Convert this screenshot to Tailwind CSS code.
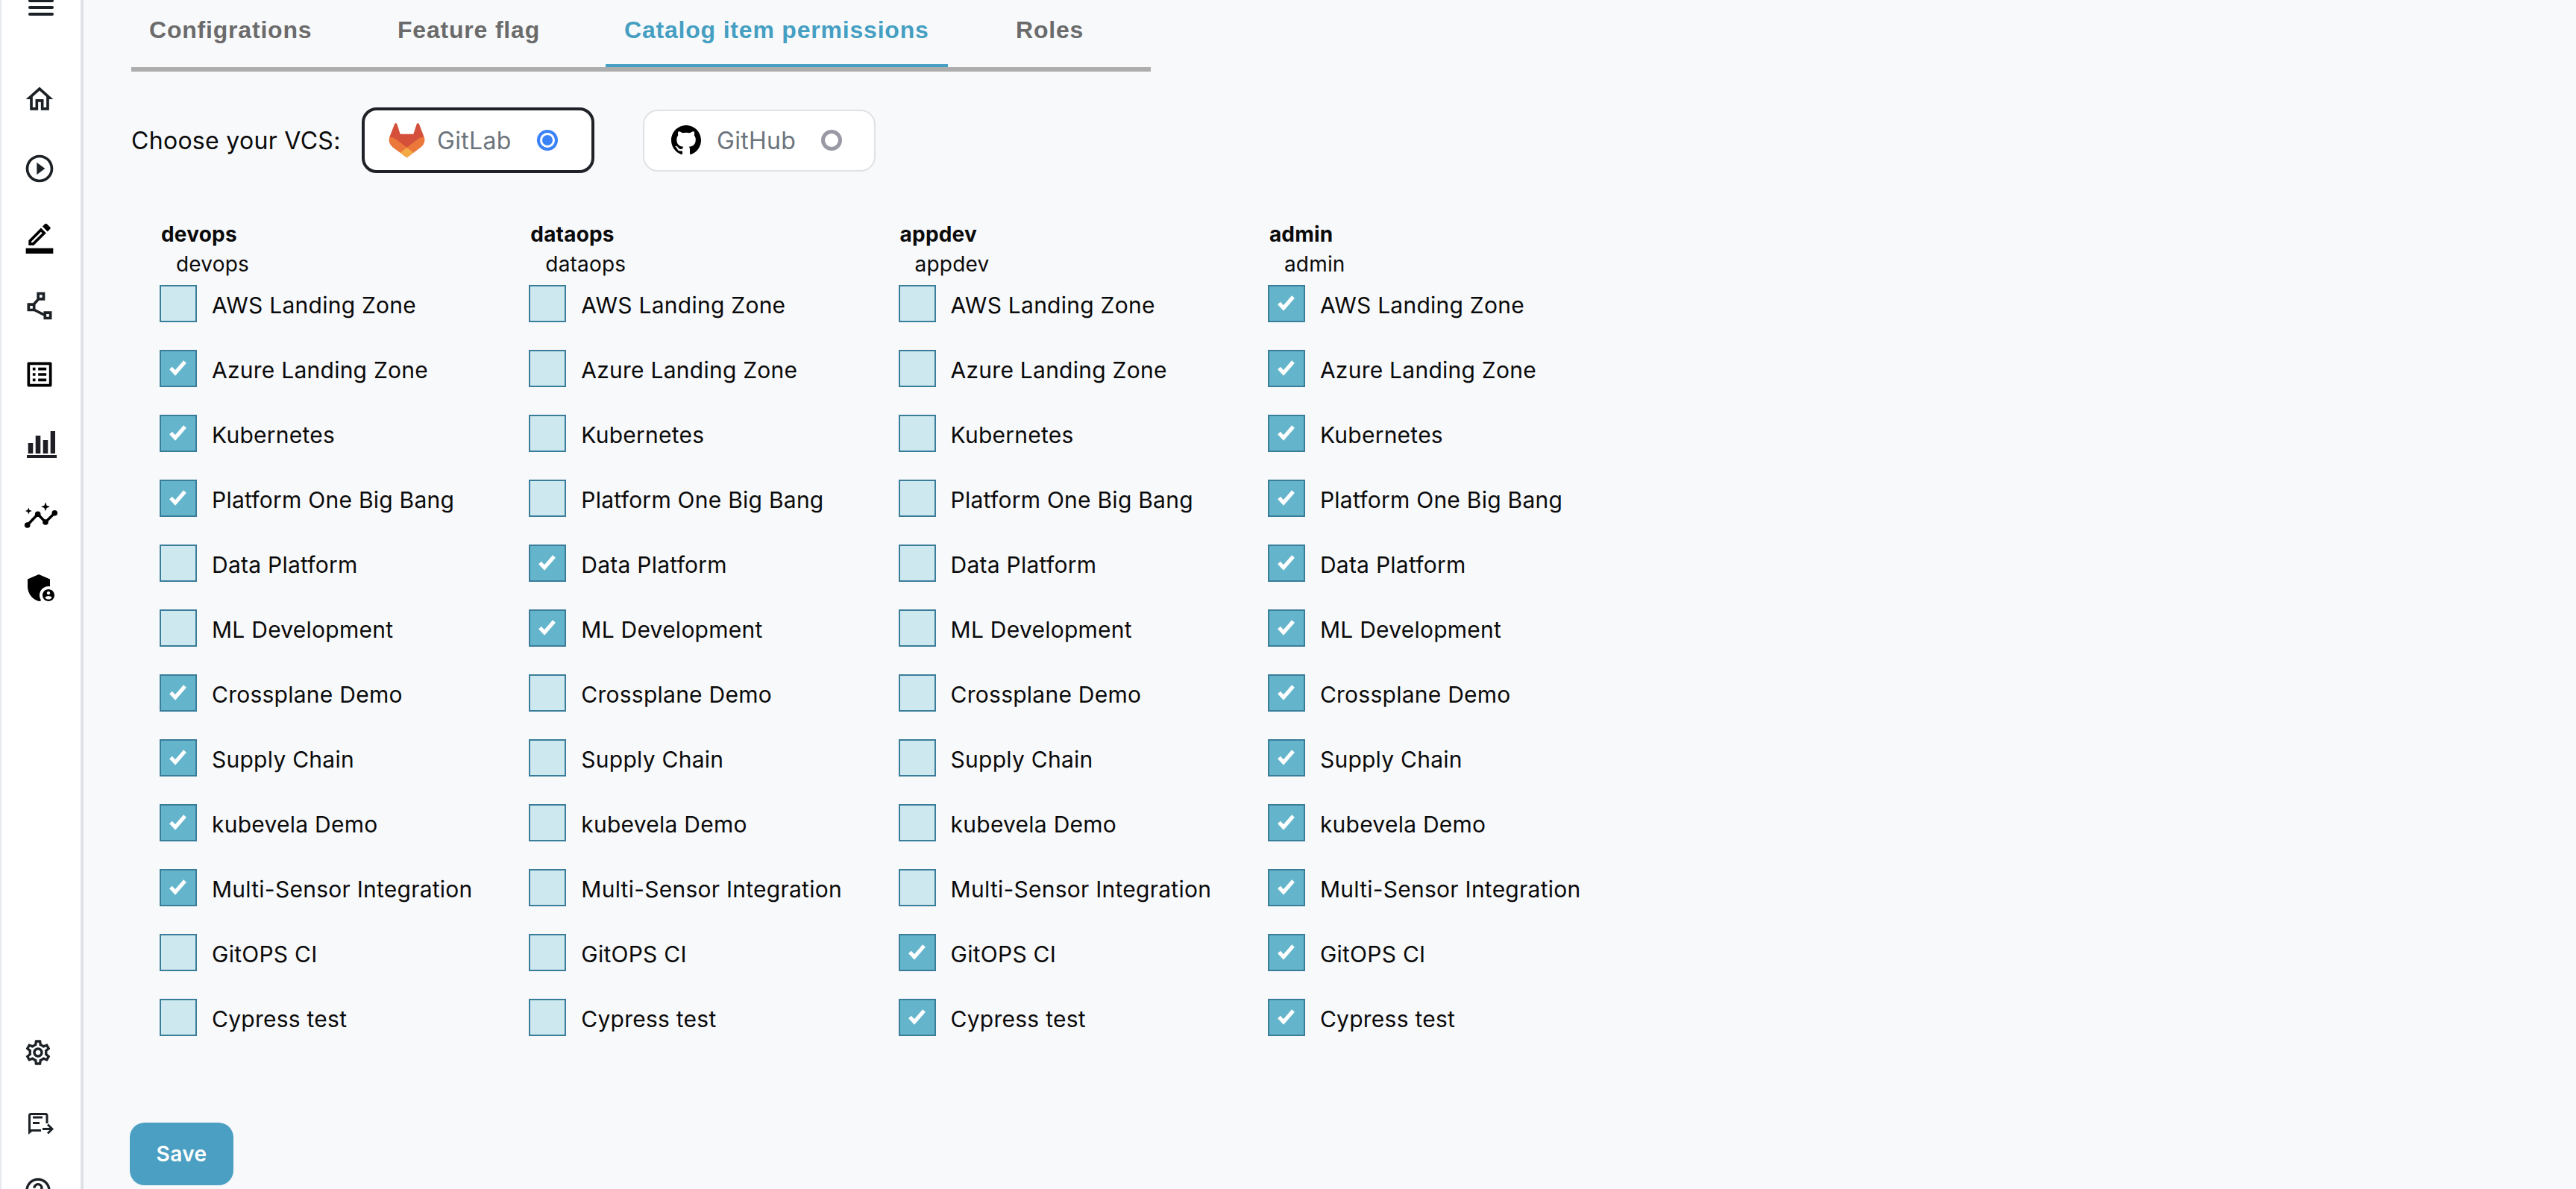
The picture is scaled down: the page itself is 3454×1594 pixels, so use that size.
<!DOCTYPE html>
<html><head><meta charset="utf-8"><title>Catalog item permissions</title>
<script src="https://cdn.jsdelivr.net/npm/@tailwindcss/browser@4"></script>
</head>
<body>
<div class="flex h-[1594px] w-[3454px] overflow-hidden bg-[#f8f9fb] font-[Inter,sans-serif] text-[#0a0a0a]">
<aside class="flex flex-col h-full w-[112px] shrink-0 bg-white border-l-2 border-r-4 border-l-[#e5e9ee] border-r-[#dee2e6] text-[#1c2126]">
<svg class="block shrink-0 ml-[36px] -mt-[1px]" width="34" height="22" viewBox="0 0 34 22" fill="currentColor"><rect y="0" width="34" height="4" rx="2"/><rect y="9" width="34" height="4" rx="2"/><rect y="18" width="34" height="4" rx="2"/></svg>
<svg class="block shrink-0 ml-[29px] mt-[90px]" width="44" height="44" viewBox="0 0 24 24" fill="currentColor"><path d="m12 5.69 5 4.5V18h-2v-6H9v6H7v-7.81zM12 3 2 12h3v8h6v-6h2v6h6v-8h3z"/></svg>
<svg class="block shrink-0 ml-[29px] mt-[49px]" width="44" height="44" viewBox="0 0 24 24" fill="currentColor"><path d="M10 16.5l6-4.5-6-4.5v9zM12 2C6.48 2 2 6.48 2 12s4.48 10 10 10 10-4.48 10-10S17.52 2 12 2zm0 18c-4.41 0-8-3.59-8-8s3.59-8 8-8 8 3.59 8 8-3.59 8-8 8z"/></svg>
<svg class="block shrink-0 ml-[29px] mt-[48px] text-black" width="44" height="44" viewBox="0 0 24 24" fill="currentColor"><path d="M16.81 8.94l-3.75-3.75L4 14.25V18h3.75l9.06-9.06zM6 16v-.92l7.06-7.06.92.92L6.92 16H6zm13.71-9.96c.39-.39.39-1.02 0-1.41L17.37 2.29c-.39-.39-1.02-.39-1.41 0L14.13 4.12l3.75 3.75 1.83-1.83zM2 20h20v4H2z"/></svg>
<svg class="block shrink-0 ml-[29px] mt-[48px]" width="44" height="44" viewBox="0 0 24 24" fill="currentColor"><path d="M15 16v1.26l-6-3v-3.17L11.7 8H16V2h-6v4.9L7.3 10H3v6h5l7 3.5V22h6v-6h-6zM12 4h2v2h-2V4zM7 14H5v-2h2v2zm12 6h-2v-2h2v2z"/></svg>
<svg class="block shrink-0 ml-[29px] mt-[48px] text-black" width="44" height="44" viewBox="0 0 24 24" fill="currentColor"><path d="M19 5v14H5V5h14m1.1-2H3.9c-.5 0-.9.4-.9.9v16.2c0 .4.4.9.9.9h16.2c.4 0 .9-.5.9-.9V3.9c0-.5-.5-.9-.9-.9zM11 7h6v2h-6V7zm0 4h6v2h-6v-2zm0 4h6v2h-6zM7 7h2v2H7zm0 4h2v2H7zm0 4h2v2H7z"/></svg>
<svg class="block shrink-0 ml-[33px] mt-[52px] text-[#1e1e24]" width="42" height="40" viewBox="0 0 42 40" fill="currentColor"><rect x="2.7" y="18" width="6.6" height="14"/><rect x="12.7" y="8" width="6.6" height="24"/><rect x="22.7" y="14" width="6.6" height="18"/><rect x="32.7" y="2" width="6.3" height="30"/><rect x="1" y="34" width="40" height="4"/></svg>
<svg class="block shrink-0 ml-[28px] mt-[54px] text-black" width="50" height="48" viewBox="0 0 50 48" fill="currentColor"><path d="M6.7 34 20.7 19.3 31 30 43.3 17.7" fill="none" stroke="currentColor" stroke-width="3.6"/><circle cx="6.7" cy="34" r="3.8"/><circle cx="20.7" cy="19.3" r="3.8"/><circle cx="31" cy="30" r="3.8"/><circle cx="43.3" cy="17.7" r="3.8"/><path d="M8.3 10.5 9.5 13.8 12.8 15 9.5 16.2 8.3 19.5 7.1 16.2 3.8 15 7.1 13.8Z"/><path d="M31 3.3 32.6 7.7 37 9.3 32.6 10.9 31 15.3 29.4 10.9 25 9.3 29.4 7.7Z"/></svg>
<svg class="block shrink-0 ml-[29px] mt-[46px] text-black" width="48" height="48" viewBox="0 0 24 24" fill="currentColor"><path d="M17 11c.34 0 .67.04 1 .09V6.27L10.5 3 3 6.27v4.91c0 4.54 3.2 8.79 7.5 9.82.55-.13 1.08-.32 1.6-.55-.69-.98-1.1-2.17-1.1-3.45 0-3.31 2.69-6 6-6z"/><path d="M17 13c-2.21 0-4 1.79-4 4s1.79 4 4 4 4-1.79 4-4-1.79-4-4-4zm0 1.38c.62 0 1.12.51 1.12 1.12s-.51 1.12-1.12 1.12-1.12-.51-1.12-1.12.5-1.12 1.12-1.12zm0 5.37c-.93 0-1.74-.46-2.24-1.17.05-.72 1.51-1.08 2.24-1.08s2.19.36 2.24 1.08c-.5.71-1.31 1.17-2.24 1.17z"/></svg>
<svg class="block shrink-0 ml-[29px] mt-[579px]" width="40" height="40" viewBox="0 0 24 24" fill="currentColor"><path d="M19.43 12.98c.04-.32.07-.64.07-.98 0-.34-.03-.66-.07-.98l2.11-1.65c.19-.15.24-.42.12-.64l-2-3.46c-.09-.16-.26-.25-.44-.25-.06 0-.12.01-.17.03l-2.49 1c-.52-.4-1.08-.73-1.69-.98l-.38-2.65C14.46 2.18 14.25 2 14 2h-4c-.25 0-.46.18-.49.42l-.38 2.65c-.61.25-1.17.59-1.69.98l-2.49-1c-.06-.02-.12-.03-.18-.03-.17 0-.34.09-.43.25l-2 3.46c-.13.22-.07.49.12.64l2.11 1.65c-.04.32-.07.65-.07.98 0 .33.03.66.07.98l-2.11 1.65c-.19.15-.24.42-.12.64l2 3.46c.09.16.26.25.44.25.06 0 .12-.01.17-.03l2.49-1c.52.4 1.08.73 1.69.98l.38 2.65c.03.24.24.42.49.42h4c.25 0 .46-.18.49-.42l.38-2.65c.61-.25 1.17-.59 1.69-.98l2.49 1c.06.02.12.03.18.03.17 0 .34-.09.43-.25l2-3.46c.12-.22.07-.49-.12-.64l-2.11-1.65zm-1.98-1.71c.04.31.05.52.05.73 0 .21-.02.43-.05.73l-.14 1.13.89.7 1.08.84-.7 1.21-1.27-.51-1.04-.42-.9.68c-.43.32-.84.56-1.25.73l-1.06.43-.16 1.13-.2 1.35h-1.4l-.19-1.35-.16-1.13-1.06-.43c-.43-.18-.83-.41-1.23-.71l-.91-.7-1.06.43-1.27.51-.7-1.21 1.08-.84.89-.7-.14-1.13c-.03-.31-.05-.54-.05-.74s.02-.43.05-.73l.14-1.13-.89-.7-1.08-.84.7-1.21 1.27.51 1.04.42.9-.68c.43-.32.84-.56 1.25-.73l1.06-.43.16-1.13.2-1.35h1.39l.19 1.35.16 1.13 1.06.43c.43.18.83.41 1.23.71l.91.7 1.06-.43 1.27-.51.7 1.21-1.07.85-.89.7.14 1.13zM12 8c-2.21 0-4 1.79-4 4s1.79 4 4 4 4-1.79 4-4-1.79-4-4-4zm0 6c-1.1 0-2-.9-2-2s.9-2 2-2 2 .9 2 2-.9 2-2 2z"/></svg>
<svg class="block shrink-0 ml-[23px] mt-[50px]" width="60" height="50" viewBox="0 0 60 50" fill="currentColor"><path d="M14.5 37V14.5Q14.5 12.5 16.5 12.5H36Q38 12.5 38 14.5V25" fill="none" stroke="currentColor" stroke-width="3"/><path d="M13 33H30V36H18L13 40Z"/><rect x="19" y="15.5" width="13" height="3"/><rect x="19" y="23" width="9" height="3"/><path d="M32 31H41.5L38 27.5 40 25.5 47 32.5 40 39.5 38 37.5 41.5 34H32Z"/></svg>
<svg class="block shrink-0 ml-[29px] mt-[45px]" width="40" height="40" viewBox="0 0 24 24" fill="currentColor"><path d="M11 18h2v-2h-2v2zm1-16C6.48 2 2 6.48 2 12s4.48 10 10 10 10-4.48 10-10S17.52 2 12 2zm0 18c-4.41 0-8-3.59-8-8s3.59-8 8-8 8 3.59 8 8-3.59 8-8 8zm0-14c-2.21 0-4 1.79-4 4h2c0-1.1.9-2 2-2s2 .9 2 2c0 2-3 1.75-3 5h2c0-2.25 3-2.5 3-5 0-2.21-1.79-4-4-4z"/></svg>
</aside>
<main class="flex-1 pl-[64px]">
<nav class="flex w-[1367px] h-[96px] border-b-[6px] border-[#adadad] font-['Liberation_Sans',sans-serif] font-bold text-[32px] leading-[36px] tracking-[0.8px] text-[#6b6b6b]">
<div class="w-[266px] h-[90px] pt-[22px] pl-[24px] mr-[67px]">Configrations</div>
<div class="w-[236px] h-[90px] pt-[22px] pl-[24px] mr-[67px]">Feature flag</div>
<div class="w-[459px] h-[90px] pt-[22px] pl-[25px] mr-[67px] border-b-4 border-[#459fc2] text-[#459fc2]">Catalog item permissions</div>
<div class="h-[90px] pt-[22px] px-[24px]">Roles</div>
</nav>
<section class="flex items-center h-[88px] mt-[48px] text-[32px] tracking-[0.3px]">
<span class="w-[309px] pt-[2px] leading-[40px]">Choose your VCS:</span>
<div class="flex items-center w-[312px] h-[88px] rounded-[20px] border-4 border-[#1f2328] bg-white pl-[32px]">
<svg class="shrink-0" width="49" height="46" viewBox="94 97 192 186"><path fill="#d4503a" d="M282.83,170.73l-.27-.69-26.14-68.22a6.81,6.81,0,0,0-2.69-3.24,7,7,0,0,0-8,.43,7,7,0,0,0-2.32,3.52l-17.65,54H154.29l-17.65-54A6.86,6.86,0,0,0,134.32,99a7,7,0,0,0-8-.43,6.87,6.87,0,0,0-2.69,3.24L97.44,170l-.26.69a48.54,48.54,0,0,0,16.1,56.1l.09.07.24.17,39.82,29.82,19.7,14.91,12,9.06a8.07,8.07,0,0,0,9.76,0l12-9.06,19.7-14.91,40.06-30,.1-.08A48.56,48.56,0,0,0,282.83,170.73Z"/><path fill="#ec773b" d="M282.83,170.73l-.27-.69a88.3,88.3,0,0,0-35.15,15.8L190,229.25c19.55,14.79,36.57,27.64,36.57,27.64l40.06-30,.1-.08A48.56,48.56,0,0,0,282.83,170.73Z"/><path fill="#f4aa45" d="M153.43,256.89l19.7,14.91,12,9.06a8.07,8.07,0,0,0,9.76,0l12-9.06,19.7-14.91S209.55,244,190,229.25C170.45,244,153.43,256.89,153.43,256.89Z"/><path fill="#ec773b" d="M132.58,185.84A88.19,88.19,0,0,0,97.44,170l-.26.69a48.54,48.54,0,0,0,16.1,56.1l.09.07.24.17,39.82,29.82s17-12.85,36.57-27.64Z"/></svg>
<span class="ml-[16px] pt-[2px] w-[134px] text-[#6c757d]">GitLab</span>
<span class="flex items-center justify-center w-[28px] h-[28px] rounded-full border-[4px] border-[#3b82f6]"><span class="w-[14px] h-[14px] rounded-full bg-[#3b82f6]"></span></span>
</div>
<div class="flex items-center w-[312px] h-[83px] ml-[65px] rounded-[20px] border-2 border-[#dee2e6] bg-white pl-[36px]">
<svg class="shrink-0" width="40" height="40" viewBox="0 0 16 16" fill="#000"><path d="M8 0C3.58 0 0 3.58 0 8c0 3.54 2.29 6.53 5.47 7.59.4.07.55-.17.55-.38 0-.19-.01-.82-.01-1.49-2.01.37-2.53-.49-2.69-.94-.09-.23-.48-.94-.82-1.13-.28-.15-.68-.52-.01-.53.63-.01 1.08.58 1.23.82.72 1.21 1.87.87 2.33.66.07-.52.28-.87.51-1.07-1.78-.2-3.64-.89-3.64-3.95 0-.87.31-1.59.82-2.15-.08-.2-.36-1.02.08-2.12 0 0 .67-.21 2.2.82.64-.18 1.32-.27 2-.27.68 0 1.36.09 2 .27 1.53-1.04 2.2-.82 2.2-.82.44 1.1.16 1.92.08 2.12.51.56.82 1.27.82 2.15 0 3.07-1.87 3.75-3.65 3.95.29.25.54.73.54 1.48 0 1.07-.01 1.93-.01 2.2 0 .21.15.46.55.38A8.013 8.013 0 0016 8c0-4.42-3.58-8-8-8z"/></svg>
<span class="ml-[21px] pt-[2px] w-[140px] text-[#6c757d]">GitHub</span>
<span class="w-[28px] h-[28px] rounded-full border-[5px] border-[#9a9aa6]"></span>
</div>
</section>
<section class="grid grid-cols-[495.3px_495.3px_495.3px_495.3px] ml-[38px] mt-[62px] text-[30px] leading-[36px] tracking-[0.25px]">
<div>
<div class="font-bold text-[28px] leading-[40px] pl-[2px] tracking-[0.2px]">devops</div>
<div class="text-[28px] leading-[40px] pl-[22px] mb-[8px] tracking-[0.2px]">devops</div>
<div class="flex items-center h-[50px] mb-[37px]"><span class="w-[50px] h-[50px] border-2 border-[#3a7d9a] bg-[#cde9ef]"></span><span class="ml-[20px] pt-[4px]">AWS Landing Zone</span></div>
<div class="flex items-center h-[50px] mb-[37px]"><span class="w-[50px] h-[50px] border-2 border-[#3a7d9a] bg-[#64b5cc]"><svg width="46" height="46" viewBox="2 2 46 46"><path d="M15 24.5 21 31 34 16" fill="none" stroke="#fff" stroke-width="5"/></svg></span><span class="ml-[20px] pt-[4px]">Azure Landing Zone</span></div>
<div class="flex items-center h-[50px] mb-[37px]"><span class="w-[50px] h-[50px] border-2 border-[#3a7d9a] bg-[#64b5cc]"><svg width="46" height="46" viewBox="2 2 46 46"><path d="M15 24.5 21 31 34 16" fill="none" stroke="#fff" stroke-width="5"/></svg></span><span class="ml-[20px] pt-[4px]">Kubernetes</span></div>
<div class="flex items-center h-[50px] mb-[37px]"><span class="w-[50px] h-[50px] border-2 border-[#3a7d9a] bg-[#64b5cc]"><svg width="46" height="46" viewBox="2 2 46 46"><path d="M15 24.5 21 31 34 16" fill="none" stroke="#fff" stroke-width="5"/></svg></span><span class="ml-[20px] pt-[4px]">Platform One Big Bang</span></div>
<div class="flex items-center h-[50px] mb-[37px]"><span class="w-[50px] h-[50px] border-2 border-[#3a7d9a] bg-[#cde9ef]"></span><span class="ml-[20px] pt-[4px]">Data Platform</span></div>
<div class="flex items-center h-[50px] mb-[37px]"><span class="w-[50px] h-[50px] border-2 border-[#3a7d9a] bg-[#cde9ef]"></span><span class="ml-[20px] pt-[4px]">ML Development</span></div>
<div class="flex items-center h-[50px] mb-[37px]"><span class="w-[50px] h-[50px] border-2 border-[#3a7d9a] bg-[#64b5cc]"><svg width="46" height="46" viewBox="2 2 46 46"><path d="M15 24.5 21 31 34 16" fill="none" stroke="#fff" stroke-width="5"/></svg></span><span class="ml-[20px] pt-[4px]">Crossplane Demo</span></div>
<div class="flex items-center h-[50px] mb-[37px]"><span class="w-[50px] h-[50px] border-2 border-[#3a7d9a] bg-[#64b5cc]"><svg width="46" height="46" viewBox="2 2 46 46"><path d="M15 24.5 21 31 34 16" fill="none" stroke="#fff" stroke-width="5"/></svg></span><span class="ml-[20px] pt-[4px]">Supply Chain</span></div>
<div class="flex items-center h-[50px] mb-[37px]"><span class="w-[50px] h-[50px] border-2 border-[#3a7d9a] bg-[#64b5cc]"><svg width="46" height="46" viewBox="2 2 46 46"><path d="M15 24.5 21 31 34 16" fill="none" stroke="#fff" stroke-width="5"/></svg></span><span class="ml-[20px] pt-[4px]">kubevela Demo</span></div>
<div class="flex items-center h-[50px] mb-[37px]"><span class="w-[50px] h-[50px] border-2 border-[#3a7d9a] bg-[#64b5cc]"><svg width="46" height="46" viewBox="2 2 46 46"><path d="M15 24.5 21 31 34 16" fill="none" stroke="#fff" stroke-width="5"/></svg></span><span class="ml-[20px] pt-[4px]">Multi-Sensor Integration</span></div>
<div class="flex items-center h-[50px] mb-[37px]"><span class="w-[50px] h-[50px] border-2 border-[#3a7d9a] bg-[#cde9ef]"></span><span class="ml-[20px] pt-[4px]">GitOPS CI</span></div>
<div class="flex items-center h-[50px] mb-[37px]"><span class="w-[50px] h-[50px] border-2 border-[#3a7d9a] bg-[#cde9ef]"></span><span class="ml-[20px] pt-[4px]">Cypress test</span></div>
</div>
<div>
<div class="font-bold text-[28px] leading-[40px] pl-[2px] tracking-[0.2px]">dataops</div>
<div class="text-[28px] leading-[40px] pl-[22px] mb-[8px] tracking-[0.2px]">dataops</div>
<div class="flex items-center h-[50px] mb-[37px]"><span class="w-[50px] h-[50px] border-2 border-[#3a7d9a] bg-[#cde9ef]"></span><span class="ml-[20px] pt-[4px]">AWS Landing Zone</span></div>
<div class="flex items-center h-[50px] mb-[37px]"><span class="w-[50px] h-[50px] border-2 border-[#3a7d9a] bg-[#cde9ef]"></span><span class="ml-[20px] pt-[4px]">Azure Landing Zone</span></div>
<div class="flex items-center h-[50px] mb-[37px]"><span class="w-[50px] h-[50px] border-2 border-[#3a7d9a] bg-[#cde9ef]"></span><span class="ml-[20px] pt-[4px]">Kubernetes</span></div>
<div class="flex items-center h-[50px] mb-[37px]"><span class="w-[50px] h-[50px] border-2 border-[#3a7d9a] bg-[#cde9ef]"></span><span class="ml-[20px] pt-[4px]">Platform One Big Bang</span></div>
<div class="flex items-center h-[50px] mb-[37px]"><span class="w-[50px] h-[50px] border-2 border-[#3a7d9a] bg-[#64b5cc]"><svg width="46" height="46" viewBox="2 2 46 46"><path d="M15 24.5 21 31 34 16" fill="none" stroke="#fff" stroke-width="5"/></svg></span><span class="ml-[20px] pt-[4px]">Data Platform</span></div>
<div class="flex items-center h-[50px] mb-[37px]"><span class="w-[50px] h-[50px] border-2 border-[#3a7d9a] bg-[#64b5cc]"><svg width="46" height="46" viewBox="2 2 46 46"><path d="M15 24.5 21 31 34 16" fill="none" stroke="#fff" stroke-width="5"/></svg></span><span class="ml-[20px] pt-[4px]">ML Development</span></div>
<div class="flex items-center h-[50px] mb-[37px]"><span class="w-[50px] h-[50px] border-2 border-[#3a7d9a] bg-[#cde9ef]"></span><span class="ml-[20px] pt-[4px]">Crossplane Demo</span></div>
<div class="flex items-center h-[50px] mb-[37px]"><span class="w-[50px] h-[50px] border-2 border-[#3a7d9a] bg-[#cde9ef]"></span><span class="ml-[20px] pt-[4px]">Supply Chain</span></div>
<div class="flex items-center h-[50px] mb-[37px]"><span class="w-[50px] h-[50px] border-2 border-[#3a7d9a] bg-[#cde9ef]"></span><span class="ml-[20px] pt-[4px]">kubevela Demo</span></div>
<div class="flex items-center h-[50px] mb-[37px]"><span class="w-[50px] h-[50px] border-2 border-[#3a7d9a] bg-[#cde9ef]"></span><span class="ml-[20px] pt-[4px]">Multi-Sensor Integration</span></div>
<div class="flex items-center h-[50px] mb-[37px]"><span class="w-[50px] h-[50px] border-2 border-[#3a7d9a] bg-[#cde9ef]"></span><span class="ml-[20px] pt-[4px]">GitOPS CI</span></div>
<div class="flex items-center h-[50px] mb-[37px]"><span class="w-[50px] h-[50px] border-2 border-[#3a7d9a] bg-[#cde9ef]"></span><span class="ml-[20px] pt-[4px]">Cypress test</span></div>
</div>
<div>
<div class="font-bold text-[28px] leading-[40px] pl-[2px] tracking-[0.2px]">appdev</div>
<div class="text-[28px] leading-[40px] pl-[22px] mb-[8px] tracking-[0.2px]">appdev</div>
<div class="flex items-center h-[50px] mb-[37px]"><span class="w-[50px] h-[50px] border-2 border-[#3a7d9a] bg-[#cde9ef]"></span><span class="ml-[20px] pt-[4px]">AWS Landing Zone</span></div>
<div class="flex items-center h-[50px] mb-[37px]"><span class="w-[50px] h-[50px] border-2 border-[#3a7d9a] bg-[#cde9ef]"></span><span class="ml-[20px] pt-[4px]">Azure Landing Zone</span></div>
<div class="flex items-center h-[50px] mb-[37px]"><span class="w-[50px] h-[50px] border-2 border-[#3a7d9a] bg-[#cde9ef]"></span><span class="ml-[20px] pt-[4px]">Kubernetes</span></div>
<div class="flex items-center h-[50px] mb-[37px]"><span class="w-[50px] h-[50px] border-2 border-[#3a7d9a] bg-[#cde9ef]"></span><span class="ml-[20px] pt-[4px]">Platform One Big Bang</span></div>
<div class="flex items-center h-[50px] mb-[37px]"><span class="w-[50px] h-[50px] border-2 border-[#3a7d9a] bg-[#cde9ef]"></span><span class="ml-[20px] pt-[4px]">Data Platform</span></div>
<div class="flex items-center h-[50px] mb-[37px]"><span class="w-[50px] h-[50px] border-2 border-[#3a7d9a] bg-[#cde9ef]"></span><span class="ml-[20px] pt-[4px]">ML Development</span></div>
<div class="flex items-center h-[50px] mb-[37px]"><span class="w-[50px] h-[50px] border-2 border-[#3a7d9a] bg-[#cde9ef]"></span><span class="ml-[20px] pt-[4px]">Crossplane Demo</span></div>
<div class="flex items-center h-[50px] mb-[37px]"><span class="w-[50px] h-[50px] border-2 border-[#3a7d9a] bg-[#cde9ef]"></span><span class="ml-[20px] pt-[4px]">Supply Chain</span></div>
<div class="flex items-center h-[50px] mb-[37px]"><span class="w-[50px] h-[50px] border-2 border-[#3a7d9a] bg-[#cde9ef]"></span><span class="ml-[20px] pt-[4px]">kubevela Demo</span></div>
<div class="flex items-center h-[50px] mb-[37px]"><span class="w-[50px] h-[50px] border-2 border-[#3a7d9a] bg-[#cde9ef]"></span><span class="ml-[20px] pt-[4px]">Multi-Sensor Integration</span></div>
<div class="flex items-center h-[50px] mb-[37px]"><span class="w-[50px] h-[50px] border-2 border-[#3a7d9a] bg-[#64b5cc]"><svg width="46" height="46" viewBox="2 2 46 46"><path d="M15 24.5 21 31 34 16" fill="none" stroke="#fff" stroke-width="5"/></svg></span><span class="ml-[20px] pt-[4px]">GitOPS CI</span></div>
<div class="flex items-center h-[50px] mb-[37px]"><span class="w-[50px] h-[50px] border-2 border-[#3a7d9a] bg-[#64b5cc]"><svg width="46" height="46" viewBox="2 2 46 46"><path d="M15 24.5 21 31 34 16" fill="none" stroke="#fff" stroke-width="5"/></svg></span><span class="ml-[20px] pt-[4px]">Cypress test</span></div>
</div>
<div>
<div class="font-bold text-[28px] leading-[40px] pl-[2px] tracking-[0.2px]">admin</div>
<div class="text-[28px] leading-[40px] pl-[22px] mb-[8px] tracking-[0.2px]">admin</div>
<div class="flex items-center h-[50px] mb-[37px]"><span class="w-[50px] h-[50px] border-2 border-[#3a7d9a] bg-[#64b5cc]"><svg width="46" height="46" viewBox="2 2 46 46"><path d="M15 24.5 21 31 34 16" fill="none" stroke="#fff" stroke-width="5"/></svg></span><span class="ml-[20px] pt-[4px]">AWS Landing Zone</span></div>
<div class="flex items-center h-[50px] mb-[37px]"><span class="w-[50px] h-[50px] border-2 border-[#3a7d9a] bg-[#64b5cc]"><svg width="46" height="46" viewBox="2 2 46 46"><path d="M15 24.5 21 31 34 16" fill="none" stroke="#fff" stroke-width="5"/></svg></span><span class="ml-[20px] pt-[4px]">Azure Landing Zone</span></div>
<div class="flex items-center h-[50px] mb-[37px]"><span class="w-[50px] h-[50px] border-2 border-[#3a7d9a] bg-[#64b5cc]"><svg width="46" height="46" viewBox="2 2 46 46"><path d="M15 24.5 21 31 34 16" fill="none" stroke="#fff" stroke-width="5"/></svg></span><span class="ml-[20px] pt-[4px]">Kubernetes</span></div>
<div class="flex items-center h-[50px] mb-[37px]"><span class="w-[50px] h-[50px] border-2 border-[#3a7d9a] bg-[#64b5cc]"><svg width="46" height="46" viewBox="2 2 46 46"><path d="M15 24.5 21 31 34 16" fill="none" stroke="#fff" stroke-width="5"/></svg></span><span class="ml-[20px] pt-[4px]">Platform One Big Bang</span></div>
<div class="flex items-center h-[50px] mb-[37px]"><span class="w-[50px] h-[50px] border-2 border-[#3a7d9a] bg-[#64b5cc]"><svg width="46" height="46" viewBox="2 2 46 46"><path d="M15 24.5 21 31 34 16" fill="none" stroke="#fff" stroke-width="5"/></svg></span><span class="ml-[20px] pt-[4px]">Data Platform</span></div>
<div class="flex items-center h-[50px] mb-[37px]"><span class="w-[50px] h-[50px] border-2 border-[#3a7d9a] bg-[#64b5cc]"><svg width="46" height="46" viewBox="2 2 46 46"><path d="M15 24.5 21 31 34 16" fill="none" stroke="#fff" stroke-width="5"/></svg></span><span class="ml-[20px] pt-[4px]">ML Development</span></div>
<div class="flex items-center h-[50px] mb-[37px]"><span class="w-[50px] h-[50px] border-2 border-[#3a7d9a] bg-[#64b5cc]"><svg width="46" height="46" viewBox="2 2 46 46"><path d="M15 24.5 21 31 34 16" fill="none" stroke="#fff" stroke-width="5"/></svg></span><span class="ml-[20px] pt-[4px]">Crossplane Demo</span></div>
<div class="flex items-center h-[50px] mb-[37px]"><span class="w-[50px] h-[50px] border-2 border-[#3a7d9a] bg-[#64b5cc]"><svg width="46" height="46" viewBox="2 2 46 46"><path d="M15 24.5 21 31 34 16" fill="none" stroke="#fff" stroke-width="5"/></svg></span><span class="ml-[20px] pt-[4px]">Supply Chain</span></div>
<div class="flex items-center h-[50px] mb-[37px]"><span class="w-[50px] h-[50px] border-2 border-[#3a7d9a] bg-[#64b5cc]"><svg width="46" height="46" viewBox="2 2 46 46"><path d="M15 24.5 21 31 34 16" fill="none" stroke="#fff" stroke-width="5"/></svg></span><span class="ml-[20px] pt-[4px]">kubevela Demo</span></div>
<div class="flex items-center h-[50px] mb-[37px]"><span class="w-[50px] h-[50px] border-2 border-[#3a7d9a] bg-[#64b5cc]"><svg width="46" height="46" viewBox="2 2 46 46"><path d="M15 24.5 21 31 34 16" fill="none" stroke="#fff" stroke-width="5"/></svg></span><span class="ml-[20px] pt-[4px]">Multi-Sensor Integration</span></div>
<div class="flex items-center h-[50px] mb-[37px]"><span class="w-[50px] h-[50px] border-2 border-[#3a7d9a] bg-[#64b5cc]"><svg width="46" height="46" viewBox="2 2 46 46"><path d="M15 24.5 21 31 34 16" fill="none" stroke="#fff" stroke-width="5"/></svg></span><span class="ml-[20px] pt-[4px]">GitOPS CI</span></div>
<div class="flex items-center h-[50px] mb-[37px]"><span class="w-[50px] h-[50px] border-2 border-[#3a7d9a] bg-[#64b5cc]"><svg width="46" height="46" viewBox="2 2 46 46"><path d="M15 24.5 21 31 34 16" fill="none" stroke="#fff" stroke-width="5"/></svg></span><span class="ml-[20px] pt-[4px]">Cypress test</span></div>
</div>
</section>
<button class="block w-[139px] h-[84px] -ml-[2px] mt-[79px] rounded-[20px] bg-[#4a9fc2] text-white font-semibold text-[28px] tracking-[0.4px]">Save</button>
</main>
</div>
</body></html>
